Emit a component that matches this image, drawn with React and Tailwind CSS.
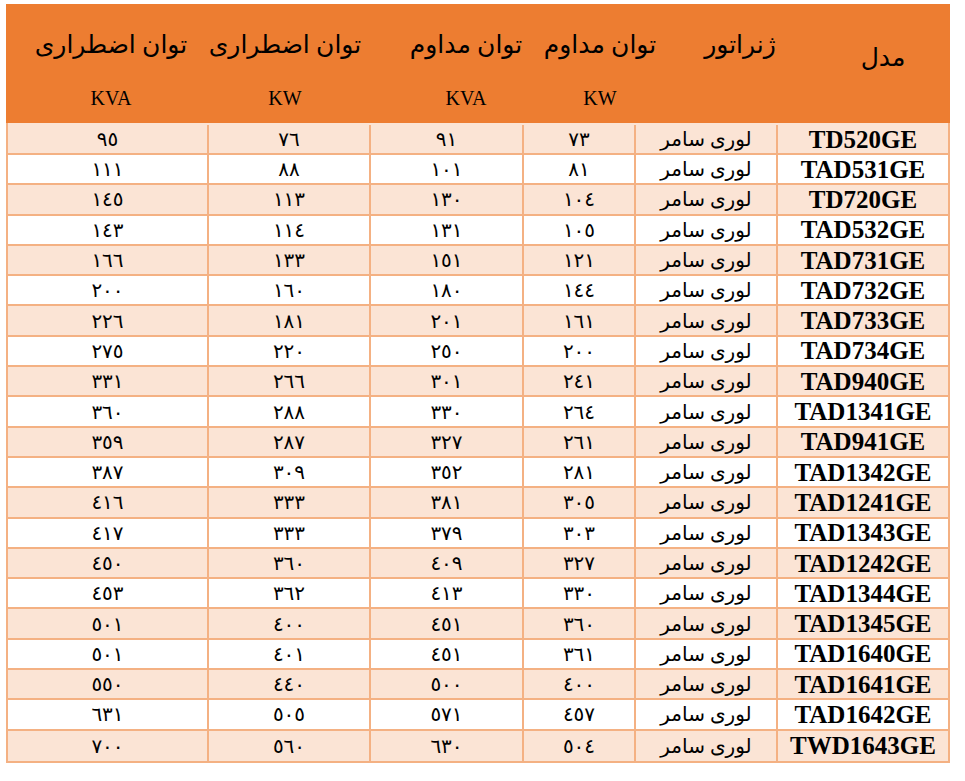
import React from "react";

const rows = [
  [95, 76, 91, 73, "TD520GE"],
  [111, 88, 101, 81, "TAD531GE"],
  [145, 113, 130, 104, "TD720GE"],
  [143, 114, 131, 105, "TAD532GE"],
  [166, 133, 151, 121, "TAD731GE"],
  [200, 160, 180, 144, "TAD732GE"],
  [226, 181, 201, 161, "TAD733GE"],
  [275, 220, 250, 200, "TAD734GE"],
  [331, 266, 301, 241, "TAD940GE"],
  [360, 288, 330, 264, "TAD1341GE"],
  [359, 287, 327, 261, "TAD941GE"],
  [387, 309, 352, 281, "TAD1342GE"],
  [416, 333, 381, 305, "TAD1241GE"],
  [417, 333, 379, 303, "TAD1343GE"],
  [450, 360, 409, 327, "TAD1242GE"],
  [453, 362, 413, 330, "TAD1344GE"],
  [501, 400, 451, 360, "TAD1345GE"],
  [501, 401, 451, 361, "TAD1640GE"],
  [550, 440, 500, 400, "TAD1641GE"],
  [631, 505, 571, 457, "TAD1642GE"],
  [700, 560, 630, 504, "TWD1643GE"],
];

const ar = (n) =>
  String(n)
    .split("")
    .map((d) => String.fromCharCode(0x0660 + Number(d)))
    .join("");

const font = { fontFamily: '"Liberation Serif", "DejaVu Sans", serif' };

function HeadCell({ w, title, unit, top = "mt-[21px]" }) {
  return (
    <div className={`flex flex-col items-center shrink-0 ${w}`}>
      <div className={`${top} h-[40px] leading-[40px] text-[25px] text-black whitespace-nowrap`} dir="rtl">
        {title}
      </div>
      {unit && (
        <div className="mt-[21px] h-[24px] leading-[24px] text-[20px] text-black">{unit}</div>
      )}
    </div>
  );
}

export default function App() {
  return (
    <div className="bg-white w-[965px] h-[781px] pt-[4px] pl-[6px]" style={font}>
      <div className="w-[944px]">
        <div className="h-[119px] bg-[#ED7D31] flex pl-[25px]">
          <HeadCell w="w-[160px]" title="توان اضطراری" unit="KVA" />
          <div className="w-[14px] shrink-0" />
          <HeadCell w="w-[160px]" title="توان اضطراری" unit="KW" />
          <div className="w-[41px] shrink-0" />
          <HeadCell w="w-[120px]" title="توان مداوم" unit="KVA" />
          <div className="w-[14px] shrink-0" />
          <HeadCell w="w-[120px]" title="توان مداوم" unit="KW" />
          <div className="w-[30px] shrink-0" />
          <HeadCell w="w-[100px]" title="ژنراتور" />
          <div className="w-[43px] shrink-0" />
          <HeadCell w="w-[100px]" title="مدل" top="mt-[34px]" />
        </div>
        <div className="border-l-2 border-r-2 border-b-2 border-[#F4B183]">
          {rows.map((r, i) => (
            <div
              key={i}
              className={`grid grid-cols-[201px_162px_153px_112px_142px_170px] grid-rows-1 leading-none ${
                i === 0 ? "h-[32px] pt-[2px]" : "h-[30.3px]"
              } ${i < rows.length - 1 ? "border-b-2" : ""} border-[#F4B183] ${
                i % 2 === 0 ? "bg-[#FBE4D5]" : "bg-white"
              }`}
            >
              {r.slice(0, 4).map((v, j) => (
                <div
                  key={j}
                  className="border-r-2 border-[#F4B183] flex items-center justify-center text-[20px] text-black"
                >
                  {ar(v)}
                </div>
              ))}
              <div className="border-r-2 border-[#F4B183] flex items-center justify-center text-[20px] text-black" dir="rtl">
                لوری سامر
              </div>
              <div className="flex items-center justify-center text-[25px] font-bold text-black">
                {r[4]}
              </div>
            </div>
          ))}
        </div>
      </div>
    </div>
  );
}
